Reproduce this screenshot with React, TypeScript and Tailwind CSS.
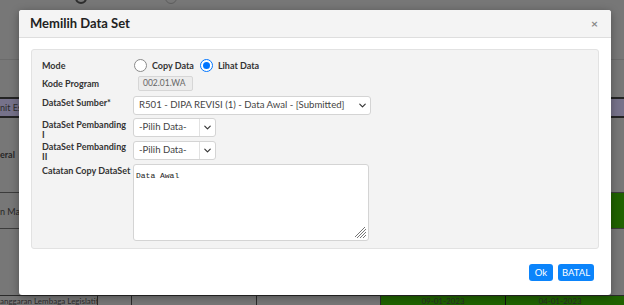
import React from 'react';
import { ChevronDown } from 'lucide-react';

const font = { fontFamily: 'Lato, "Open Sans", "Liberation Sans", sans-serif' };

const Radio: React.FC<{ checked?: boolean; label: string }> = ({ checked, label }) => (
  <label className="flex items-center gap-[5px]">
    {checked ? (
      <span className="w-[13px] h-[13px] rounded-full border-[1.5px] border-[#0075ff] bg-white flex items-center justify-center">
        <span className="w-[7px] h-[7px] rounded-full bg-[#0075ff]" />
      </span>
    ) : (
      <span className="w-[13px] h-[13px] rounded-full border border-[#8a8a8a] bg-white" />
    )}
    <span className="text-[9px] font-bold text-[#333]">{label}</span>
  </label>
);

const Select: React.FC<{ value: string; width: string; divider?: boolean }> = ({ value, width, divider }) => (
  <div className={`${width} h-[19px] flex items-center bg-white border border-[#d4d4d4] rounded-[3px] text-[9.6px] text-[#444]`}>
    <span className="flex-1 pl-[5px] whitespace-nowrap overflow-hidden">{value}</span>
    <span className={`h-full flex items-center justify-center w-[16px] ${divider ? 'border-l border-[#e2e2e2]' : ''}`}>
      <ChevronDown size={11} strokeWidth={2.5} className="text-[#333]" />
    </span>
  </div>
);

const Row: React.FC<{ label: React.ReactNode; children: React.ReactNode; className?: string }> = ({ label, children, className }) => (
  <div className={`flex ${className ?? ''}`}>
    <div className="w-[92px] shrink-0 text-[9px] font-bold text-[#333] leading-[10px] whitespace-nowrap">{label}</div>
    {children}
  </div>
);

export default function App() {
  return (
    <div className="relative w-[624px] h-[305px] overflow-hidden bg-[#777] text-[9px]" style={font}>
      {/* dimmed page behind the modal */}
      <div className="flex flex-col h-full">
        <div className="h-[60px] border-b border-[#6b6b6b]">
          <div className="flex gap-[78px] pl-[75px] -mt-[8px]">
            <span className="w-[12px] h-[12px] rounded-full border-2 border-[#2d2d2d]" />
            <span className="w-[12px] h-[12px] rounded-full border border-[#5e5e5e]" />
          </div>
        </div>
        <div className="h-[37px]" />
        <div className="h-[21px] bg-[#76728a] border-y-2 border-[#232323] flex items-center text-[#2b2b2b]">
          <span className="w-[19px] whitespace-nowrap overflow-hidden">nit Es</span>
        </div>
        <div className="h-[74px] flex items-center text-[#262626]">
          <span className="w-[19px] font-bold">eral</span>
        </div>
        <div className="h-[37px] border-y border-[#3c3c3c] flex justify-between text-[#262626]">
          <span className="mt-[12px] w-[19px] whitespace-nowrap overflow-hidden">n Mar</span>
          <span className="w-[14px] bg-[#1f6200]" />
        </div>
        <div className="flex-1" />
        <div className="h-[10px] flex border-t border-[#2a2a2a] text-[8px] leading-[10px] text-[#2a2a2a]">
          <div className="w-[98px] border-r border-[#2a2a2a] whitespace-nowrap overflow-hidden">
            anggaran Lembaga Legislatif
          </div>
          <div className="w-[34px] border-r border-[#2a2a2a]" />
          <div className="w-[125px] border-r border-[#2a2a2a]" />
          <div className="w-[124px] border-r border-[#2a2a2a]" />
          <div className="w-[125px] border-r border-[#111] bg-[#1f6200] text-center">09-01-2023</div>
          <div className="flex-1 bg-[#1f6200] text-center pr-[10px]">04-01-2023</div>
        </div>
      </div>

      {/* modal */}
      <div className="absolute left-[19px] top-[10px] w-[592px] h-[285px] bg-white rounded-[3px] shadow-[0_2px_8px_rgba(0,0,0,0.35)] flex flex-col">
        <div className="h-[28px] shrink-0 bg-[#f4f4f4] border-b border-[#dedede] rounded-t-[3px] flex items-center justify-between pl-[11px] pr-[13px]">
          <span className="text-[13px] font-bold text-[#222]">Memilih Data Set</span>
          <span className="text-[12px] font-bold text-[#888] leading-none">×</span>
        </div>

        <div className="px-[12px] pt-[11px]">
          <div className="h-[200px] bg-[#f3f3f3] border border-[#e2e2e2] rounded-[3px] pl-[10px] pt-[9px] flex flex-col">
            <Row label={<span className="leading-[13px]">Mode</span>} className="h-[13px] items-center">
              <div className="flex items-center gap-[6px]">
                <Radio label="Copy Data" />
                <Radio checked label="Lihat Data" />
              </div>
            </Row>
            <Row label="Kode Program" className="mt-[4px] h-[15px] items-center">
              <div className="ml-[4px] w-[55px] h-[15px] bg-[#ececec] border border-[#d6d6d6] rounded-[2px] text-[8.5px] text-[#666] flex items-center pl-[4px]">
                002.01.WA
              </div>
            </Row>
            <Row label={<div className="pt-[2px]">DataSet Sumber*</div>} className="mt-[5px] h-[19px]">
              <div className="-ml-[1px]">
                <Select value="R501 - DIPA REVISI (1) - Data Awal - [Submitted]" width="w-[238px]" />
              </div>
            </Row>
            <Row label={<div className="pt-[2px]">DataSet Pembanding<br />I</div>} className="mt-[3px] h-[19px]">
              <div className="-ml-[1px]">
                <Select value="-Pilih Data-" width="w-[83px]" divider />
              </div>
            </Row>
            <Row label={<div className="pt-[1px]">DataSet Pembanding<br />II</div>} className="mt-[4px] h-[19px]">
              <div className="-ml-[1px]">
                <Select value="-Pilih Data-" width="w-[83px]" divider />
              </div>
            </Row>
            <Row label={<div className="pt-[2px]">Catatan Copy DataSet</div>} className="mt-[4px]">
              <div className="-ml-[1px] relative w-[236px] h-[77px] bg-white border border-[#d4d4d4] rounded-[3px] pl-[2px] pt-[3px]">
                <span className="text-[8px] text-[#222]" style={{ fontFamily: '"Liberation Mono", "DejaVu Sans Mono", monospace' }}>
                  Data Awal
                </span>
                <svg className="absolute right-[1px] bottom-[1px]" width="12" height="12" viewBox="0 0 12 12">
                  <path d="M11 2L2 11M11 5L5 11M11 8L8 11M11 -1L-1 11" stroke="#777" strokeWidth="1" />
                </svg>
              </div>
            </Row>
          </div>
        </div>

        <div className="flex-1 flex items-end justify-end gap-[5px] pr-[17px] pb-[14px]">
          <button className="w-[24px] h-[17px] rounded-[3px] bg-[#0b84fb] text-white text-[9.5px] leading-none">Ok</button>
          <button className="w-[36px] h-[17px] rounded-[3px] bg-[#0b84fb] text-white text-[9.5px] leading-none">BATAL</button>
        </div>
      </div>
    </div>
  );
}
